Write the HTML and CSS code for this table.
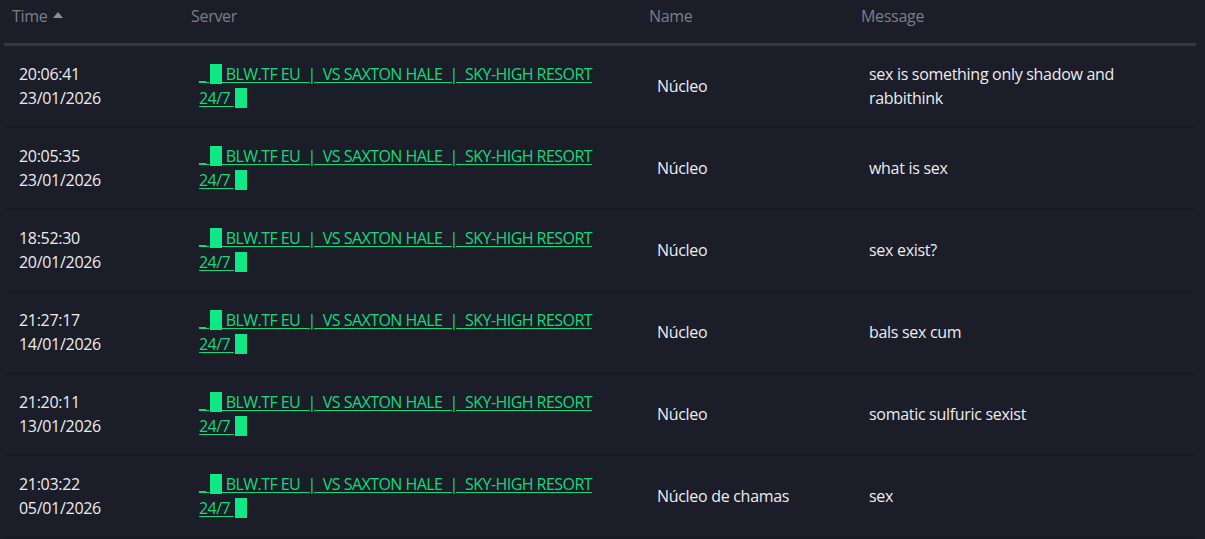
FILE: index.html
```html
<!DOCTYPE html>
<html lang="en">
	<head>
		<meta charset="UTF-8" />
		<title>Chat log</title>
		<link rel="stylesheet" href="styles.css">
	</head>
	<body>
		<div class="container">
			<table class="log">
				<colgroup>
					<col class="c-time" />
					<col class="c-server" />
					<col class="c-name" />
					<col class="c-msg" />
				</colgroup>
				<thead>
					<tr>
						<th>Time <span class="sort"></span></th>
						<th>Server</th>
						<th>Name</th>
						<th>Message</th>
					</tr>
				</thead>
				<tbody>
					<tr>
						<td>20:06:41<br />23/01/2026</td>
						<td><a class="server" href="#">_ <span class="blk">█</span> BLW.TF EU &nbsp;| &nbsp;VS SAXTON HALE &nbsp;| &nbsp;SKY-HIGH RESORT 24/7 <span class="blk">█</span></a></td>
						<td>Núcleo</td>
						<td>sex is something only shadow and rabbithink</td>
					</tr>
					<tr>
						<td>20:05:35<br />23/01/2026</td>
						<td><a class="server" href="#">_ <span class="blk">█</span> BLW.TF EU &nbsp;| &nbsp;VS SAXTON HALE &nbsp;| &nbsp;SKY-HIGH RESORT 24/7 <span class="blk">█</span></a></td>
						<td>Núcleo</td>
						<td>what is sex</td>
					</tr>
					<tr>
						<td>18:52:30<br />20/01/2026</td>
						<td><a class="server" href="#">_ <span class="blk">█</span> BLW.TF EU &nbsp;| &nbsp;VS SAXTON HALE &nbsp;| &nbsp;SKY-HIGH RESORT 24/7 <span class="blk">█</span></a></td>
						<td>Núcleo</td>
						<td>sex exist?</td>
					</tr>
					<tr>
						<td>21:27:17<br />14/01/2026</td>
						<td><a class="server" href="#">_ <span class="blk">█</span> BLW.TF EU &nbsp;| &nbsp;VS SAXTON HALE &nbsp;| &nbsp;SKY-HIGH RESORT 24/7 <span class="blk">█</span></a></td>
						<td>Núcleo</td>
						<td>bals sex cum</td>
					</tr>
					<tr>
						<td>21:20:11<br />13/01/2026</td>
						<td><a class="server" href="#">_ <span class="blk">█</span> BLW.TF EU &nbsp;| &nbsp;VS SAXTON HALE &nbsp;| &nbsp;SKY-HIGH RESORT 24/7 <span class="blk">█</span></a></td>
						<td>Núcleo</td>
						<td>somatic sulfuric sexist</td>
					</tr>
					<tr>
						<td>21:03:22<br />05/01/2026</td>
						<td><a class="server" href="#">_ <span class="blk">█</span> BLW.TF EU &nbsp;| &nbsp;VS SAXTON HALE &nbsp;| &nbsp;SKY-HIGH RESORT 24/7 <span class="blk">█</span></a></td>
						<td>Núcleo de chamas</td>
						<td>sex</td>
					</tr>
				</tbody>
			</table>
		</div>
	</body>
</html>
```

FILE: styles.css
```css
html, body{
	margin: 0;
	background: #1b1d29;
}
body{
	font: 16px/24px "Open Sans", "DejaVu Sans", sans-serif;
	letter-spacing: -0.3px;
	color: #ececef;
}
div.container{
	padding: 0 9px 0 4px;
}
table.log{
	width: 1192px;
	table-layout: fixed;
	border-collapse: collapse;
}
col.c-time{ width: 179px; }
col.c-server{ width: 458px; }
col.c-name{ width: 212px; }
col.c-msg{ width: 343px; }

table.log th{
	text-align: left;
	font-weight: normal;
	color: #7b7e89;
	padding: 4px 8px 15px;
	border-bottom: 3px solid #343641;
}
span.sort{
	display: inline-block;
	width: 0;
	height: 0;
	border-left: 5px solid transparent;
	border-right: 5px solid transparent;
	border-bottom: 6px solid #8a8d97;
	vertical-align: 4px;
	margin-left: 2px;
}
table.log td{
	padding: 16px 16px 17px;
	vertical-align: middle;
	border-bottom: 1px solid #16181f;
}
table.log td:first-child{
	padding-left: 15px;
}
a.server{
	display: block;
	max-width: 400px;
	color: #13d97a;
	letter-spacing: -0.55px;
	text-decoration: underline;
	text-underline-offset: 2px;
}
span.blk{
	display: inline-block;
	width: 12px;
	height: 20px;
	overflow: hidden;
	vertical-align: -4px;
	background: #10e886;
	color: #10e886;
	font: 14px/20px "DejaVu Sans", sans-serif;
	letter-spacing: 0;
	margin-left: 1px;
}
```
